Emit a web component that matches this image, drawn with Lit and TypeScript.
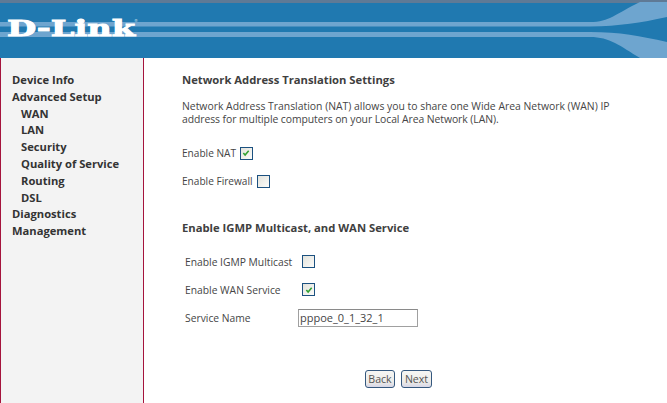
import { LitElement, html, css, svg } from "lit";
import { customElement } from "lit/decorators.js";

const check = svg`<svg class="tick" viewBox="0 0 9 9" width="8" height="8"><path d="M1.5 4.5 L3.5 6.8 L7.5 2" fill="none" stroke="#2fa02f" stroke-width="1.7"/></svg>`;

@customElement("app-root")
export class AppRoot extends LitElement {
  static styles = css`
    :host { display: block; width: 667px; height: 403px; overflow: hidden; background: #fff;
      font-family: "Open Sans", "Noto Sans", sans-serif; font-size: 10.4px; color: #454545; }
    .banner { display: block; width: 667px; height: 58px; }
    .logo { font-family: "DejaVu Serif", serif; font-weight: 700; font-size: 22px; fill: #fff; stroke: #fff; stroke-width: 0.9px; }
    .reg { font-family: "DejaVu Sans", sans-serif; font-size: 4px; fill: #d5e4f0; }
    .body { display: flex; height: 345px; }
    .side { box-sizing: border-box; width: 144px; flex: none; background: #f3f3f3;
      border-left: 1px solid #a5143c; border-right: 1px solid #a5143c; padding: 14px 0 0 11px;
      font-weight: 700; font-size: 11.2px; color: #333; }
    .side div { height: 16.8px; line-height: 16.8px; white-space: nowrap; }
    .side .sub { padding-left: 9px; }
    .main { flex: 1; padding: 15px 0 0 38px; }
    h1 { margin: 0; font-size: 11.25px; line-height: 14px; font-weight: 700; color: #404040; }
    p { margin: 13px 0 0; line-height: 13px; width: 450px; }
    .line { display: block; white-space: nowrap; }
    .line.tight { letter-spacing: -0.07px; }
    .row { display: flex; align-items: center; gap: 4px; height: 16px; font-size: 10.1px; }
    .nat { margin-top: 19px; }
    .fw { margin-top: 12px; }
    .igmp { margin-top: 32px; }
    .box { box-sizing: border-box; width: 13px; height: 13px; border: 1px solid #1c5180; background: linear-gradient(135deg,#e3e3dc,#fbfbf9); display: flex; align-items: center; justify-content: center; }
    .grid { display: grid; grid-template-columns: 113px auto; justify-content: start; margin: 18px 0 0 3px; align-items: center; grid-auto-rows: 17px; row-gap: 11px; font-size: 10.3px; white-space: nowrap; }
    .grid .c { padding-left: 4px; }
    .input { box-sizing: border-box; width: 120px; height: 18px; border: 1px solid #a0a0a0; border-top-color: #8a8a8a; background: #fff; font-size: 11px; line-height: 16px; padding: 0 1px; color: #454545; }
    .btns { display: flex; gap: 6px; margin: 44px 0 0 183px; }
    .btn { box-sizing: border-box; height: 18px; border: 1px solid #35587e; border-radius: 3px; background: linear-gradient(#f6f6f3,#ecebe8 70%,#d6d6e6); font-size: 10.6px; line-height: 16px; text-align: center; color: #555; }
    .back { width: 30px; }
    .next { width: 31px; }
  `;
  render() {
    return html`
      <svg class="banner" viewBox="0 0 667 58">
        <rect width="667" height="58" fill="#2079b0"/>
        <rect width="667" height="3" fill="#5f7a96"/>
        <path d="M0 22H590C610 22 615 14 640 2H667V17C640 23 620 26 590 26.5H0Z" fill="#6ea5cf"/>
        <path d="M0 32H590C620 32 640 36 667 42V58H640C620 46 610 37 590 37H0Z" fill="#6ea5cf"/>
        <text class="logo" x="7" y="36" textLength="128" lengthAdjust="spacingAndGlyphs">D-Link</text>
        <text class="reg" x="134" y="22">®</text>
      </svg>
      <div class="body">
        <nav class="side">
          <div>Device Info</div><div>Advanced Setup</div>
          <div class="sub">WAN</div><div class="sub">LAN</div><div class="sub">Security</div>
          <div class="sub">Quality of Service</div><div class="sub">Routing</div><div class="sub">DSL</div>
          <div>Diagnostics</div><div>Management</div>
        </nav>
        <main class="main">
          <h1>Network Address Translation Settings</h1>
          <p><span class="line">Network Address Translation (NAT) allows you to share one Wide Area Network (WAN) IP</span><span class="line tight">address for multiple computers on your Local Area Network (LAN).</span></p>
          <div class="row nat">Enable NAT <span class="box">${check}</span></div>
          <div class="row fw">Enable Firewall <span class="box"></span></div>
          <h1 class="igmp">Enable IGMP Multicast, and WAN Service</h1>
          <div class="grid">
            <div>Enable IGMP Multicast</div><div class="c"><span class="box"></span></div>
            <div>Enable WAN Service</div><div class="c"><span class="box">${check}</span></div>
            <div>Service Name</div><div class="input">pppoe_0_1_32_1</div>
          </div>
          <div class="btns"><div class="btn back">Back</div><div class="btn next">Next</div></div>
        </main>
      </div>`;
  }
}
